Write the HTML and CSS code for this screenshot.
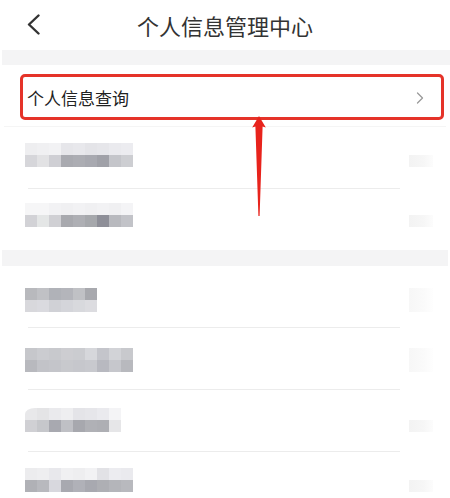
FILE: index.html
```html
<!DOCTYPE html>
<html lang="zh-CN">
<head>
<meta charset="utf-8">
<title>个人信息管理中心</title>
<link rel="stylesheet" href="styles.css">
</head>
<body>
<div class="page">
  <header class="header">
    <div class="back">
      <svg width="14" height="22" viewBox="0 0 14 22"><polyline points="11.5,1.5 2,10.5 11.5,19.5" fill="none" stroke="#333" stroke-width="2.4" stroke-linecap="round" stroke-linejoin="round"/></svg>
    </div>
    <h1 class="title">个人信息管理中心</h1>
    <div></div>
  </header>

  <div class="band"></div>

  <section class="group">
    <div class="row row-query">
      <div class="highlight">
        <span class="label">个人信息查询</span>
        <svg class="chev" width="8" height="12" viewBox="0 0 8 12"><polyline points="1.5,1 6.5,6 1.5,11" fill="none" stroke="#9a9a9a" stroke-width="1.3" stroke-linecap="round" stroke-linejoin="round"/></svg>
      </div>
    </div>
    <div class="sep sep-faint"></div>
    <div class="row pt16">
      <div class="mosaic m-a"></div>
      <div class="ghost"></div>
    </div>
    <div class="sep"></div>
    <div class="row pt14">
      <div class="mosaic m-b"></div>
      <div class="ghost"></div>
    </div>
  </section>

  <div class="band band-2"></div>

  <section class="group">
    <div class="row pt22">
      <div class="mosaic short m-c"></div>
      <div class="ghost ghost-top"></div>
    </div>
    <div class="sep"></div>
    <div class="row pt20">
      <div class="mosaic m-d"></div>
      <div class="ghost ghost-top"></div>
    </div>
    <div class="sep"></div>
    <div class="row pt18">
      <div class="mosaic mid m-e"></div>
      <div class="ghost"></div>
    </div>
    <div class="sep"></div>
    <div class="row pt16">
      <div class="mosaic m-f"></div>
      <div class="ghost"></div>
    </div>
  </section>

  <svg class="arrow" width="16" height="102" viewBox="0 0 16 102">
    <path d="M7 1 L13.8 12.6 L10.6 11.4 L7.6 101 L6.4 101 L3.4 11.4 L0.2 12.6 Z" fill="#e8231c"/>
  </svg>
</div>
</body>
</html>
```

FILE: styles.css
```css
* { box-sizing: border-box; }

html, body {
  margin: 0;
  padding: 0;
  background: #ffffff;
}

body {
  font-family: "Noto Sans CJK SC", "Noto Sans", sans-serif;
  color: #222;
}

.page {
  position: relative;
  width: 450px;
  height: 498px;
  overflow: hidden;
}

.header {
  height: 50px;
  display: grid;
  grid-template-columns: 1fr auto 1fr;
  align-items: center;
}

.back {
  padding-left: 27px;
  display: flex;
  align-items: center;
  height: 22px;
}

.title {
  margin: 0;
  font-size: 22px;
  font-weight: 400;
  color: #333;
  line-height: 30px;
  letter-spacing: 0;
}

.band {
  height: 15px;
  margin-left: 2px;
  background: #f4f4f5;
}

.band-2 {
  height: 16px;
  margin-right: 2px;
}

.group {
  display: flex;
  flex-direction: column;
}

.row {
  height: 61px;
  display: flex;
  justify-content: space-between;
  align-items: flex-start;
  padding-left: 25px;
  padding-right: 17px;
}

.pt14 { padding-top: 14px; }
.pt16 { padding-top: 16px; }
.pt18 { padding-top: 18px; }
.pt20 { padding-top: 20px; }
.pt22 { padding-top: 22px; }

.row-query {
  padding: 9px 6px 0 20px;
}

.highlight {
  width: 100%;
  height: 46px;
  border: 3px solid #e53329;
  border-radius: 5px;
  display: flex;
  align-items: center;
  justify-content: space-between;
  padding: 0 17px 0 4px;
}

.label {
  font-size: 17px;
  color: #222;
  line-height: 24px;
  margin-top: 1px;
}

.chev {
  display: block;
  margin-top: 2px;
}

.sep {
  height: 1px;
  margin: 0 50px 0 28px;
  background: #ececec;
}

.sep-faint {
  background: #f5f5f5;
  margin: 0 4px;
}

.mosaic {
  width: 108px;
  height: 24px;
}

.mosaic.short { width: 72px; }
.mosaic.mid { width: 96px; }

.ghost {
  width: 24px;
  height: 12px;
  margin-top: 12px;
  background: linear-gradient(to right, #f3f3f3, #f6f6f6 60%, #fcfcfc);
}

.ghost-top {
  height: 24px;
  margin-top: 0;
  background: linear-gradient(to right, #f7f7f7, #fafafa 60%, #fefefe);
}

.m-a {
  background:
    linear-gradient(to right, #eeeef0 0 12px, #f0f0f2 12px 24px, #f2f2f4 24px 36px, #e6e6ea 36px 48px, #e8e8ec 48px 60px, #e4e4e8 60px 72px, #e6e6ea 72px 84px, #eaeaee 84px 96px, #ececf0 96px 108px) top / 100% 12px no-repeat,
    linear-gradient(to right, #d6d6da 0 12px, #e2e2e4 12px 24px, #cfcfd4 24px 36px, #a9aab0 36px 48px, #acadb3 48px 60px, #a8a9b0 60px 72px, #a0a1a8 72px 84px, #c4c5ca 84px 96px, #cdced2 96px 108px) bottom / 100% 12px no-repeat;
}

.m-b {
  background:
    linear-gradient(to right, #f6f6f7 0 12px, #f6f6f7 12px 24px, #f2f2f4 24px 36px, #f0f0f2 36px 48px, #f2f2f4 48px 60px, #f0f0f2 60px 72px, #f2f2f4 72px 84px, #f0f0f2 84px 96px, #f4f4f6 96px 108px) top / 100% 12px no-repeat,
    linear-gradient(to right, #d2d2d6 0 12px, #e4e6e6 12px 24px, #d0d0d4 24px 36px, #a8a9ae 36px 48px, #aeafb4 48px 60px, #a6a8ac 60px 72px, #8e8f98 72px 84px, #b8b9be 84px 96px, #c2c3c8 96px 108px) bottom / 100% 12px no-repeat;
}

.m-c {
  background:
    linear-gradient(to right, #b8b9bd 0 12px, #c0c1c5 12px 24px, #b0b2b8 24px 36px, #b4b5bb 36px 48px, #c0c1c5 48px 60px, #a8a9ae 60px 72px) top / 100% 12px no-repeat,
    linear-gradient(to right, #d8d8dc 0 12px, #dadadf 12px 24px, #d0d1d6 24px 36px, #d4d5da 36px 48px, #d8d9dd 48px 60px, #dcdce0 60px 72px) bottom / 100% 12px no-repeat;
}

.m-d {
  background:
    linear-gradient(to right, #c6c7cb 0 12px, #cbccd0 12px 24px, #c8c9cd 24px 36px, #cdcdd1 36px 48px, #cbccd0 48px 60px, #d6d7db 60px 72px, #c4c5cb 72px 84px, #d2d3d7 84px 96px, #c8c9cd 96px 108px) top / 100% 12px no-repeat,
    linear-gradient(to right, #b8b9be 0 12px, #c2c3c8 12px 24px, #c4c5ca 24px 36px, #c8c9cd 36px 48px, #c6c7cc 48px 60px, #c8c9ce 60px 72px, #b8b9c0 72px 84px, #c6c7cc 84px 96px, #b8b9be 96px 108px) bottom / 100% 12px no-repeat;
}

.m-e {
  border-top-left-radius: 10px 6px;
  background:
    linear-gradient(to right, #e8e8ea 0 12px, #e4e4e6 12px 24px, #eaeaed 24px 36px, #eeeef0 36px 48px, #e4e4e8 48px 60px, #e6e6ea 60px 72px, #eaeaee 72px 84px, #f4f4f6 84px 96px) top / 100% 12px no-repeat,
    linear-gradient(to right, #d0d0d4 0 12px, #c6c7cb 12px 24px, #a8a9b0 24px 36px, #bfc0c5 36px 48px, #a7a8ae 48px 60px, #b0b1b6 60px 72px, #aeafb4 72px 84px, #e6e6e8 84px 96px) bottom / 100% 12px no-repeat;
}

.m-f {
  background:
    linear-gradient(to right, #ececee 0 12px, #eeeef0 12px 24px, #e8e8ec 24px 36px, #f0f0f2 36px 48px, #eeeef0 48px 60px, #f2f2f4 60px 72px, #e2e2e6 72px 84px, #ececf0 84px 96px, #eaeaee 96px 108px) top / 100% 12px no-repeat,
    linear-gradient(to right, #b0b1b6 0 12px, #b8b9be 12px 24px, #d8d8de 24px 36px, #a8a9b0 36px 48px, #b0b1b8 48px 60px, #a8a9b0 60px 72px, #aeafb4 72px 84px, #b4b5ba 84px 96px, #b8b9be 96px 108px) bottom / 100% 12px no-repeat;
}

.arrow {
  position: absolute;
  left: 252px;
  top: 115px;
  display: block;
}
```
